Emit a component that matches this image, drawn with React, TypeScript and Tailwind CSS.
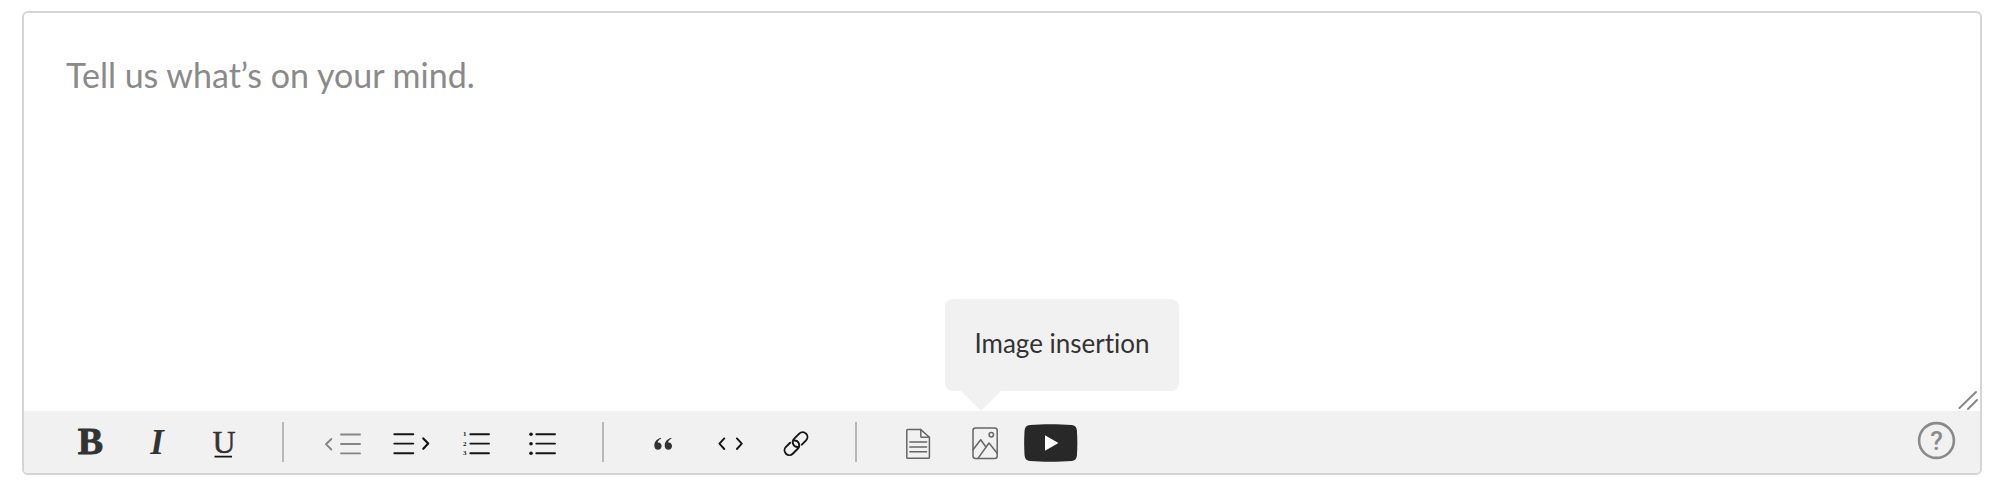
import React from "react";

type ToolButtonProps = {
  label: string;
  disabled?: boolean;
  children: React.ReactNode;
};

const ToolButton = ({ label, disabled, children }: ToolButtonProps) => (
  <button
    type="button"
    aria-label={label}
    disabled={disabled}
    className={`block shrink-0 ${disabled ? "text-[#858585]" : "text-[#151515]"}`}
  >
    <svg
      width={66}
      height={62}
      viewBox="0 0 66 62"
      fill="none"
      stroke="currentColor"
      strokeWidth={1.9}
      strokeLinecap="round"
      strokeLinejoin="round"
    >
      {children}
    </svg>
  </button>
);

const Group = ({ children }: { children: React.ReactNode }) => (
  <div className="flex gap-px">{children}</div>
);

const Separator = () => (
  <div className="ml-[25px] mr-[26px] h-10 w-[2px] shrink-0 bg-[#b8b8b8]" />
);

const letter = {
  fill: "#333333",
  stroke: "none",
  textAnchor: "middle" as const,
  fontFamily: '"Liberation Serif", serif',
};

const Tooltip = ({ text }: { text: string }) => (
  <div
    role="tooltip"
    className="absolute bottom-full -left-[5px] mb-5 flex h-[92px] w-[234px] items-center justify-center rounded-lg bg-[#f1f1f1] pb-1 text-[26px] whitespace-nowrap text-[#333333]"
  >
    {text}
    <svg
      className="absolute top-full left-4"
      width={40}
      height={20}
      viewBox="0 0 40 20"
    >
      <path d="M0 0H40L20 20Z" fill="#f1f1f1" />
    </svg>
  </div>
);

const Toolbar = () => (
  <div
    role="toolbar"
    aria-label="Formatting"
    className="flex items-center bg-[#f1f1f1] pr-6 pl-[33px]"
  >
    <Group>
      <ToolButton label="Bold">
        <text x="33.5" y="42.6" fontSize="38" fontWeight="700" {...letter} stroke="#333333" strokeWidth="0.9">B</text>
      </ToolButton>
      <ToolButton label="Italic">
        <text x="33" y="43" fontSize="35" fontWeight="700" fontStyle="italic" {...letter}>I</text>
      </ToolButton>
      <ToolButton label="Underline">
        <text x="33" y="41.5" fontSize="32" {...letter} stroke="#333333" strokeWidth="0.5">U</text>
        <path d="M23.5 45.6H41" strokeLinecap="butt" />
      </ToolButton>
    </Group>

    <Separator />

    <Group>
      <ToolButton label="Outdent" disabled>
        <path d="M31 23.5H50M31 33H50M31 42.4H50M21.3 28L16 33.2L21.3 38.5" />
      </ToolButton>
      <ToolButton label="Indent">
        <path d="M17.3 23.2H36.3M17.3 32.6H36.3M17.3 42.2H36.3" />
        <path d="M46.3 27.4L51.2 32.6L46.3 37.8" strokeWidth="2.2" />
      </ToolButton>
      <ToolButton label="Numbered list">
        <g fontSize="7" fontWeight="700" {...letter} fill="#151515">
          <text x="20.7" y="25.2">1</text>
          <text x="20.7" y="34.7">2</text>
          <text x="20.7" y="44.2">3</text>
        </g>
        <path d="M26.3 23.2H45M26.3 32.6H45M26.3 42.2H45" />
      </ToolButton>
      <ToolButton label="Bulleted list">
        <g fill="currentColor" stroke="none">
          <circle cx="20" cy="23.2" r="1.8" />
          <circle cx="20" cy="32.7" r="1.8" />
          <circle cx="20" cy="42.2" r="1.8" />
        </g>
        <path d="M25.3 23.2H44M25.3 32.6H44M25.3 42.2H44" />
      </ToolButton>
    </Group>

    <Separator />

    <Group>
      <ToolButton label="Quote">
        <g fill="#333333" stroke="none">
          <path d="M30.8 26.8L31.2 27.6C29.2 28.5 28 29.8 27.7 31.5C30 31.2 31.6 32.8 31.6 34.9C31.6 37.1 30 38.7 28 38.7C25.8 38.7 24.3 37 24.3 34.4C24.3 30.8 27 27.9 30.8 26.8Z" />
          <path d="M41.2 26.8L41.6 27.6C39.6 28.5 38.4 29.8 38.1 31.5C40.4 31.2 42 32.8 42 34.9C42 37.1 40.4 38.7 38.4 38.7C36.2 38.7 34.7 37 34.7 34.4C34.7 30.8 37.4 27.9 41.2 26.8Z" />
        </g>
      </ToolButton>
      <ToolButton label="Code">
        <path d="M27.3 27.4L22.4 32.7L27.3 38M39.9 27.4L44.8 32.7L39.9 38" />
      </ToolButton>
      <ToolButton label="Link">
        <g transform="translate(32 32.7) rotate(-45)">
          <path d="M3.5 4.8H9.4A4.8 4.8 0 0 0 9.4 -4.8H2A4.8 4.8 0 0 0 -1.2 3.4" />
          <path d="M-3.5 -4.8H-9.4A4.8 4.8 0 0 0 -9.4 4.8H-2A4.8 4.8 0 0 0 1.2 -3.4" />
        </g>
      </ToolButton>
    </Group>

    <Separator />

    <Group>
      <ToolButton label="File insertion">
        <g stroke="#666666" strokeWidth="1.5">
          <path d="M24.7 18.6H37.8L46.4 26.3V46.4Q46.4 47.3 45.5 47.3H24.7Q23.8 47.3 23.8 46.4V19.5Q23.8 18.6 24.7 18.6Z" />
          <path d="M37.8 18.6V25.4Q37.8 26.3 38.7 26.3H46.4" />
          <path d="M26.8 31H43.6M26.8 36H43.6M26.8 40.7H43.6" />
        </g>
      </ToolButton>
      <div className="relative">
        <ToolButton label="Image insertion">
          <g stroke="#666666" strokeWidth="1.5">
            <rect x="23" y="17" width="24.2" height="30.5" rx="2.5" />
            <circle cx="41.3" cy="23.8" r="2.2" />
            <path d="M23 38.8L30.7 28.7L35.4 35.2" />
            <path d="M28 47.4L39 32L47.2 42.3" />
          </g>
        </ToolButton>
        <Tooltip text="Image insertion" />
      </div>
      <ToolButton label="Video insertion">
        <path
          d="M13 14C25 13 42 13 54.5 14C58 14.3 59.6 16 59.9 19.5C60.5 28 60.5 36 59.9 44.5C59.6 48 58 49.7 54.5 50C42 51 25 51 13 50C9.5 49.7 7.9 48 7.6 44.5C7 36 7 28 7.6 19.5C7.9 16 9.5 14.3 13 14Z"
          fill="#282828"
          stroke="none"
        />
        <path d="M28 24.2L41.4 32L28 39.8Z" fill="#ffffff" stroke="none" />
      </ToolButton>
    </Group>

    <button type="button" aria-label="Help" className="ml-auto block">
      <svg width={40} height={62} viewBox="0 0 40 62">
        <circle cx="20.5" cy="29.5" r="17.4" fill="none" stroke="#8a8a8a" strokeWidth="2.6" />
        <text
          x="20.5"
          y="38.7"
          fontSize="26"
          fontWeight="500"
          fontFamily="Roboto, sans-serif"
          textAnchor="middle"
          fill="#8a8a8a"
        >
          ?
        </text>
      </svg>
    </button>
  </div>
);

export default function App() {
  return (
    <main className="bg-white pt-[11px] pr-[18px] pl-[22px] font-['Lato','Noto_Sans',sans-serif] [font-variant-ligatures:none]">
      <div className="overflow-hidden rounded-md border-2 border-[#d5d5d5]">
        <div className="relative">
          <textarea
            aria-label="Message"
            placeholder="Tell us what’s on your mind."
            className="block h-[398px] w-full resize-none px-[42px] py-10 text-[34px] leading-[44px] text-[#333333] outline-none placeholder:text-[#8a8a8a]"
          />
          <svg
            className="absolute right-0 bottom-0"
            width={24}
            height={22}
            viewBox="0 0 24 22"
            stroke="#858585"
            strokeWidth={1.9}
            strokeLinecap="round"
          >
            <path d="M20 3L3.5 19M21 11L12 20" />
          </svg>
        </div>
        <Toolbar />
      </div>
    </main>
  );
}
